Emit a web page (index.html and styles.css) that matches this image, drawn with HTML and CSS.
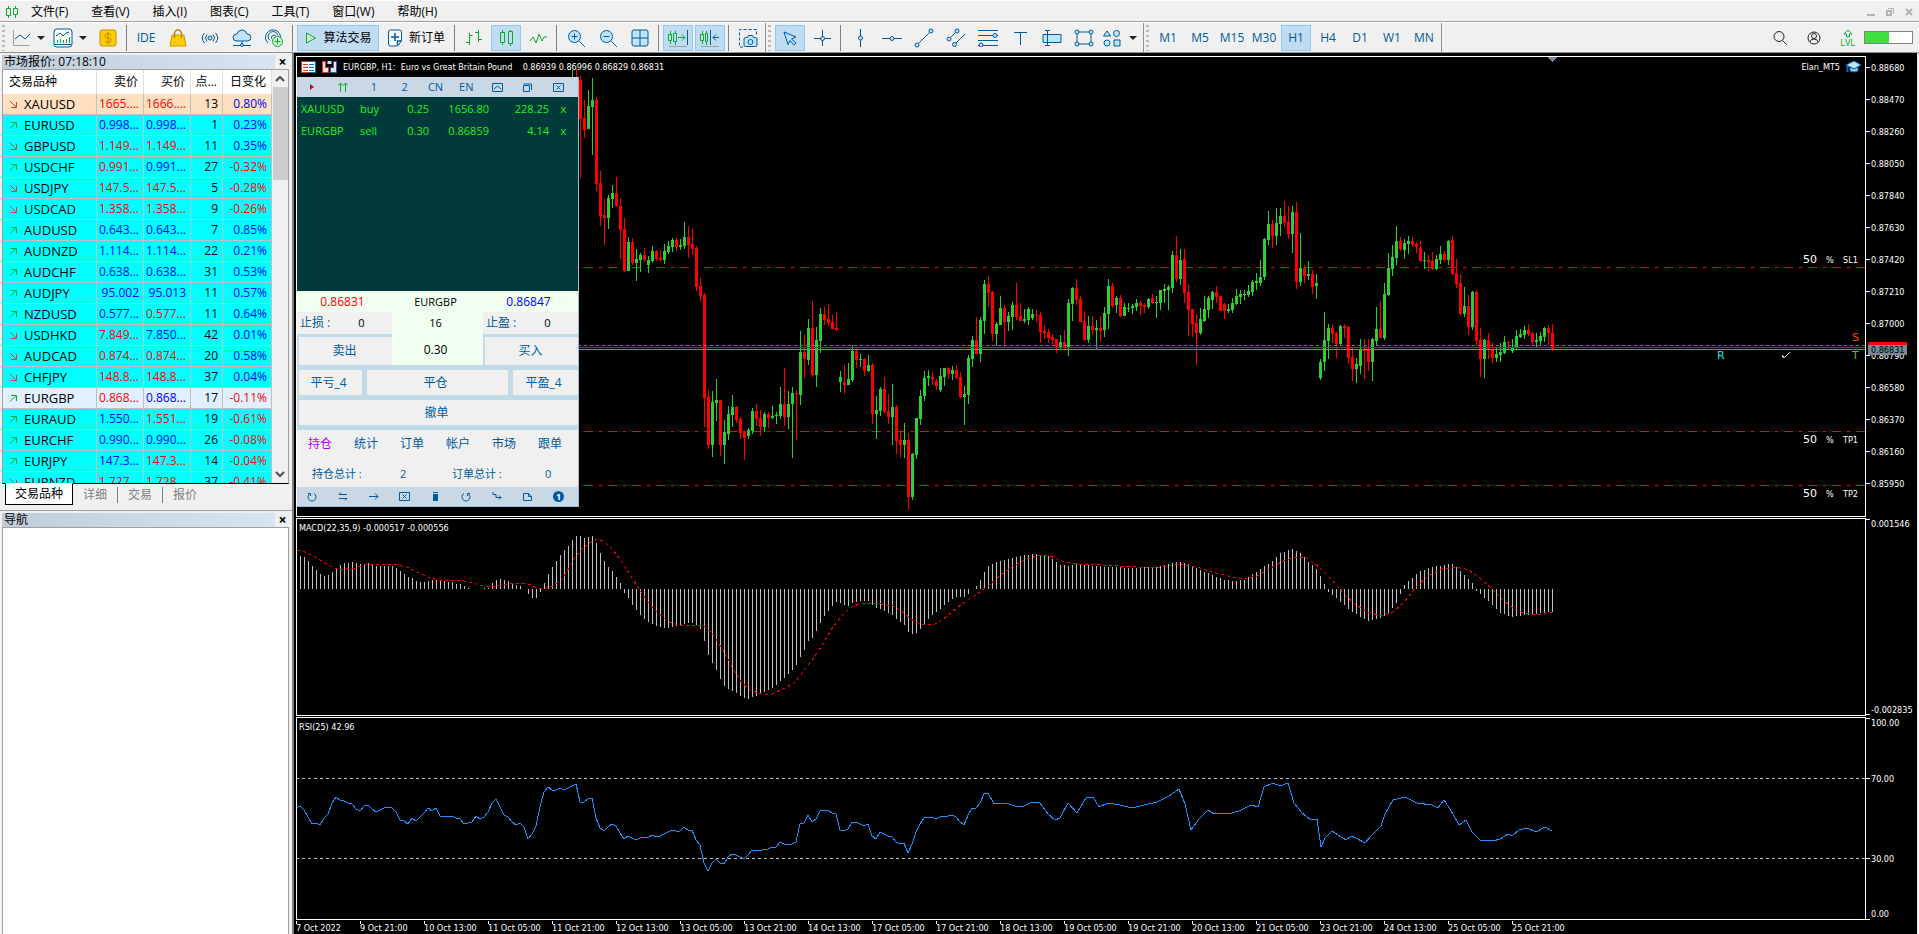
FILE: index.html
```html
<!DOCTYPE html>
<html lang="zh-CN">
<head>
    <meta charset="UTF-8">
    <meta name="viewport" content="width=device-width, initial-scale=1.0">
    <title>EURGBP, H1</title>
    <link rel="stylesheet" href="styles.css">
</head>
<body>
    <nav class="menubar">
        <svg class="menu-logo" width="14" height="14" viewBox="0 0 14 14"><path d="M3.500 1v2M3.500 11v2M10.500 1v2M10.500 9v4M1.500 3.500h4v7h-4zM8.500 3.500h4v6h-4z"/></svg>
        <button class="menu-item">文件(F)</button>
        <button class="menu-item">查看(V)</button>
        <button class="menu-item">插入(I)</button>
        <button class="menu-item">图表(C)</button>
        <button class="menu-item">工具(T)</button>
        <button class="menu-item">窗口(W)</button>
        <button class="menu-item">帮助(H)</button>
        <div class="window-controls">
            <button aria-label="最小化"><svg width="10" height="10"><path d="M1 8h8" stroke-width="2"/></svg></button>
            <button aria-label="还原"><svg width="10" height="10"><path d="M3 1.500h6M8.500 1v6" stroke-width="1"/><path d="M2 4h4v4h-4z" stroke-width="2"/></svg></button>
            <button aria-label="关闭"><svg width="10" height="10"><path d="M2 2l6 6M8 2l-6 6" stroke-width="2"/></svg></button>
        </div>
    </nav>

    <div class="toolbar">
        <span class="grip"></span>
        <button class="split" aria-label="图表类型">
            <svg width="20" height="20"><path class="g" d="M2.500 2v15.500h16"/><path class="b" d="M4 11l5-4 5 4 5-5"/></svg><i class="caret"></i>
        </button>
        <button class="split" aria-label="模板">
            <svg width="20" height="20"><rect class="bf w" x="1" y="1" width="18" height="18" rx="3"/><path class="b" d="M3 8l4-3 3 3 3-3 3-1"/><path class="n" d="M4.500 15v-3M7.500 15v-4M10.500 15v-3M13.500 15v-4M16.500 15v-6"/><path class="b" d="M2 16.500h16"/></svg><i class="caret"></i>
        </button>
        <button class="tool" aria-label="账户"><svg width="18" height="18"><rect x="1" y="1" width="16" height="16" rx="2" fill="#fc0" stroke="#c89400"/><path d="M12 6q-1-1.500-3-1.500t-3 2 3 2.500 3 2.500-3 2-3-1.500M9 3v12" fill="none" stroke="#c08600"/></svg></button>
        <span class="sep"></span>
        <button class="tool ide">IDE</button>
        <button class="tool" aria-label="市场"><svg width="18" height="18"><path d="M3 6h12l2 11h-16z" fill="#fc0" stroke="#d09a00"/><path d="M5.500 9v-4a3 3.500 0 0 1 7 0v4" fill="none" stroke="#b98500" stroke-width="1.500"/></svg></button>
        <button class="tool" aria-label="信号"><svg width="18" height="14"><circle class="bf" cx="9" cy="7" r="2"/><path class="b" d="M6 3.500q-3 3.500 0 7M12 3.500q3 3.500 0 7M3.500 2q-4.500 5 0 10M14.500 2q4.500 5 0 10"/></svg></button>
        <button class="tool" aria-label="虚拟主机"><svg width="20" height="18"><path class="bf" d="M5 12q-4 0-4-3.500t4-3.500q1-4 5-4t5 4q4 0 4 3.500t-4 3.500z"/><path class="b" d="M10 12v3M1 16.500h7M12 16.500h7"/><circle class="bf" cx="10" cy="16" r="1.500"/></svg></button>
        <button class="tool" aria-label="VPS"><svg width="20" height="20"><path class="b" d="M4 15a7.500 7.500 0 1 1 12.500-6M6 12.500a5 5 0 1 1 8-5M8 11a2.500 2.500 0 1 1 4-3"/><circle cx="13.500" cy="13.500" r="5" fill="#d7f5d7" stroke="#0ba82a"/><path class="n" d="M13.500 10.500v6M10.500 13.500h6"/></svg></button>
        <span class="sep"></span>
        <button class="tool wide active algo"><svg width="13" height="14"><path d="M2.500 2l9 5-9 5z" fill="#c9f2cf" stroke="#0ba82a"/></svg>算法交易</button>
        <button class="tool wide order"><svg width="16" height="18"><path class="bf w" d="M3.500 1h9q2 0 2 2v9l-4 5h-7q-2 0-2-2v-12q0-2 2-2z"/><path class="b" d="M8 4v8M4 8h8M14 12h-3.500v4" stroke-width="1.500"/></svg>新订单</button>
        <span class="sep"></span>
        <button class="tool" aria-label="柱状图"><svg width="18" height="18"><path class="n" d="M4.500 4v12M1 13.500h3.500M4.500 6.500h3M13.500 1v12M10 3.500h3.500M13.500 10.500h3.500"/></svg></button>
        <button class="tool active" aria-label="蜡烛图"><svg width="16" height="18"><path class="n" d="M4.500 1v2M4.500 14v2M12.500 1v1M12.500 15v2M2.500 3.500h4v10h-4zM10.500 2.500h4v12h-4z"/></svg></button>
        <button class="tool" aria-label="折线图"><svg width="18" height="12"><path class="n" d="M1 9l3-4 3 6 3-9 3 7 2-4h3"/></svg></button>
        <span class="sep"></span>
        <button class="tool" aria-label="放大"><svg width="20" height="20"><circle class="bf" cx="8.500" cy="8.500" r="6"/><path class="b" d="M13 13l6 6M8.500 5.500v6M5.500 8.500h6"/></svg></button>
        <button class="tool" aria-label="缩小"><svg width="20" height="20"><circle class="bf" cx="8.500" cy="8.500" r="6"/><path class="b" d="M13 13l6 6M5.500 8.500h6"/></svg></button>
        <button class="tool" aria-label="平铺"><svg width="18" height="18"><rect class="bf" x="1" y="1" width="16" height="16" rx="2"/><path class="b" d="M9 1v16M1 9h16"/></svg></button>
        <span class="sep"></span>
        <button class="tool active" aria-label="自动滚动"><svg width="22" height="18"><path class="n" d="M3.500 2v3M3.500 12v3M1.500 5.500h3v6h-3zM8.500 2v2M8.500 13v3M6.500 4.500h3v8h-3zM11 8.500h7M15 5.500l3 3-3 3"/><path class="b" d="M20.500 1v15"/><path class="g" d="M2 17.500h18"/></svg></button>
        <button class="tool active" aria-label="图表平移"><svg width="22" height="18"><path class="n" d="M3.500 2v3M3.500 12v3M1.500 5.500h3v6h-3zM7.500 2v2M7.500 13v3M6.500 4.500h2v8h-2z"/><path class="b" d="M11.500 1v15M20 8.500h-6M17 5.500l-3 3 3 3"/><path class="g" d="M2 17.500h18"/></svg></button>
        <span class="sep"></span>
        <button class="tool" aria-label="截图"><svg width="20" height="20"><path class="b" stroke-dasharray="3 2" d="M5 19h-3.500v-17.500h17v7"/><path class="bf" d="M6 11q0-1.500 1.500-1.500h2l1-2h4l1 2h2q1.500 0 1.500 1.500v6q0 1.500-1.500 1.500h-10q-1.500 0-1.500-1.500z"/><circle class="bf" cx="12.500" cy="14" r="2.500"/></svg></button>
        <span class="edge"></span><span class="grip"></span>
        <button class="tool active" aria-label="光标"><svg width="16" height="16"><path class="bf" d="M2 2l12 5-4.500 2 4.500 4-2 2-4-4.500-2 4z"/></svg></button>
        <button class="tool" aria-label="十字线"><svg width="18" height="18"><path class="b" d="M9.500 1v16M1 9.500h17"/><circle class="bf" cx="9.500" cy="9.500" r="2"/></svg></button>
        <span class="sep"></span>
        <button class="tool" aria-label="垂直线"><svg width="18" height="20"><path class="b" d="M9.500 1v18"/><circle class="bf" cx="9.500" cy="10" r="2"/></svg></button>
        <button class="tool" aria-label="水平线"><svg width="20" height="18"><path class="b" d="M0 9.500h20"/><circle class="bf" cx="10" cy="9.500" r="2"/></svg></button>
        <button class="tool" aria-label="趋势线"><svg width="20" height="20"><path class="b" d="M3 17l14-14"/><circle class="bf" cx="3" cy="17" r="2"/><circle class="bf" cx="17" cy="3" r="2"/></svg></button>
        <button class="tool" aria-label="通道"><svg width="20" height="20"><path class="b" d="M3 11l8-8M8 17l11-11"/><circle class="bf" cx="3" cy="11" r="2"/><circle class="bf" cx="11" cy="3" r="2"/><circle class="bf" cx="8.500" cy="16.500" r="2"/></svg></button>
        <button class="tool" aria-label="斐波那契"><svg width="20" height="18"><path class="b" d="M0 1.500h20M0 6.500h20M0 11.500h20M0 16.500h20"/><circle class="bf" cx="17" cy="6.500" r="2"/><circle class="bf" cx="3" cy="16" r="2"/></svg></button>
        <button class="tool" aria-label="文字"><svg width="16" height="16"><path class="b" d="M2 2.500h13M8.500 2v13"/></svg></button>
        <button class="tool" aria-label="标签"><svg width="20" height="18"><path class="bf" d="M1 5.500h18v8h-18z"/><path class="b" d="M3 1.500h5M5.500 2v15M3 16.500h5"/></svg></button>
        <button class="tool" aria-label="矩形"><svg width="20" height="18"><path class="b" d="M3 3h14v12h-14z"/><circle class="bf" cx="3" cy="3" r="2"/><circle class="bf" cx="17" cy="3" r="2"/><circle class="bf" cx="3" cy="15" r="2"/><circle class="bf" cx="17" cy="15" r="2"/></svg></button>
        <button class="split shapes" aria-label="图形">
            <svg width="18" height="18"><path class="bf" d="M4 2l3.500 5h-7z"/><circle class="bf" cx="13.500" cy="4.500" r="3"/><circle class="bf" cx="4" cy="14" r="3"/><path class="bf" d="M11 11h6v6h-6z"/></svg><i class="caret"></i>
        </button>
        <span class="edge"></span><span class="grip"></span>
        <button class="tool">M1</button>
        <button class="tool">M5</button>
        <button class="tool">M15</button>
        <button class="tool">M30</button>
        <button class="tool active">H1</button>
        <button class="tool">H4</button>
        <button class="tool">D1</button>
        <button class="tool">W1</button>
        <button class="tool">MN</button>
        <span class="edge"></span>
        <div class="status">
            <button aria-label="搜索"><svg width="16" height="16"><circle class="k" cx="7" cy="6.500" r="5"/><path class="k" d="M10.500 10.500l4 4"/></svg></button>
            <button aria-label="用户"><svg width="16" height="16"><circle class="k" cx="8" cy="8" r="6"/><circle class="k" cx="8" cy="6" r="2.500"/><path class="k" d="M3.500 12q1-3 4.500-3t4.500 3"/></svg></button>
            <div class="level"><svg width="10" height="9"><path class="n" d="M3.500 8v-3h-2.500l4-4 4 4h-2.500v3z"/></svg><span>LVL</span></div>
            <div class="battery"><span></span></div>
        </div>
    </div>

    <div class="workspace">
        <aside class="dock">
            <section class="market">
                <header class="dock-title"><h2>市场报价: 07:18:10</h2><button aria-label="关闭">×</button></header>
                <div class="market-body">
                    <table class="quotes">
                        <colgroup><col class="c-sym"><col class="c-price"><col class="c-price"><col class="c-spread"><col></colgroup>
                        <thead><tr><th>交易品种</th><th>卖价</th><th>买价</th><th>点...</th><th>日变化</th></tr></thead>
                        <tbody id="quotes"></tbody>
                    </table>
                    <div class="scrollbar">
                        <svg width="10" height="7"><path d="M1 6l4-4 4 4"/></svg>
                        <span class="thumb"></span>
                        <svg width="10" height="7"><path d="M1 1l4 4 4-4"/></svg>
                    </div>
                </div>
                <div class="tabs">
                    <button class="tab current">交易品种</button>
                    <button class="tab">详细</button>
                    <button class="tab">交易</button>
                    <button class="tab">报价</button>
                </div>
            </section>
            <section class="navigator">
                <header class="dock-title"><h2>导航</h2><button aria-label="关闭">×</button></header>
                <div class="navigator-body"></div>
            </section>
        </aside>

        <main class="chart">
            <div class="pane main-pane">
                <div class="plot">
                    <svg id="price" class="canvas"></svg>
                    <div class="chart-title">
                        <svg width="15" height="12"><rect width="8" height="12" fill="#d9362b"/><rect x="8" width="7" height="12" fill="#0a6ab5"/><rect x="1" y="1" width="13" height="10" fill="#fff"/><path d="M2 3.500h5M2 6.500h5M2 9.500h5" stroke="#d9362b"/><path d="M8 3.500h5M8 6.500h5M8 9.500h5" stroke="#0a6ab5"/></svg>
                        <svg width="15" height="12"><path d="M0 0h4v6h3v6h-7z" fill="#d9362b"/><path d="M11 0h4v12h-7v-6h3z" fill="#0a6ab5"/><path d="M1 1v10h5v-4h-3v-6zM14 1v10h-5v-4h3v-6z" fill="#fbe0dc"/><path d="M5.500 0h4v3h-4z" fill="#ddd"/></svg>
                        <span>EURGBP, H1:&nbsp; Euro vs Great Britain Pound&nbsp;&nbsp;&nbsp; 0.86939 0.86996 0.86829 0.86831</span>
                        <span class="expert">Elan_MT5</span>
                        <svg width="15" height="12"><path d="M0 4l8-4 7 4-7 4z" fill="#bfe4ff" stroke="#0a6ab5"/><path d="M4 6v4q4 2 8 0v-4l-4 2z" fill="#8ecbf5" stroke="#0a6ab5"/><path d="M1.500 5v6" stroke="#0a6ab5" stroke-width="2"/></svg>
                    </div>

                    <div class="trader">
                        <div class="trader-bar">
                            <button aria-label="菜单"><svg width="6" height="8"><path d="M1 1v6l4-3z" fill="#b01020"/></svg></button>
                            <button aria-label="上移"><svg width="10" height="11"><path class="n" d="M2.500 1v9M7.500 1v9M0 3.500l2.500-2.500 2.500 2.500 2.500-2.500 2.500 2.500"/></svg></button>
                            <button>1</button>
                            <button>2</button>
                            <button>CN</button>
                            <button>EN</button>
                            <button aria-label="收起"><svg width="11" height="9"><path class="b" d="M.500.500h10v8h-10zM2 6l3.500-3 3.500 3"/></svg></button>
                            <button aria-label="还原"><svg width="9" height="9"><path class="b" d="M.500 2.500h6v6h-6zM.500 1h8v6"/></svg></button>
                            <button aria-label="关闭"><svg width="11" height="9"><path class="b" d="M.500.500h10v8h-10zM3.500 2.500l4 4M7.500 2.500l-4 4"/></svg></button>
                        </div>
                        <div class="positions">
                            <table>
                                <tr><td class="p-sym">XAUUSD</td><td class="p-side">buy</td><td class="p-lots">0.25</td><td class="p-num">1656.80</td><td class="p-num">228.25</td><td class="p-x">x</td></tr>
                                <tr><td>EURGBP</td><td>sell</td><td class="p-lots">0.30</td><td class="p-num">0.86859</td><td class="p-num">4.14</td><td class="p-x">x</td></tr>
                            </table>
                        </div>
                        <div class="ticket">
                            <div class="price bid">0.86831</div>
                            <div class="symbol">EURGBP</div>
                            <div class="price ask">0.86847</div>
                            <label class="stop">止损 :<input value="0"></label>
                            <div class="center">
                                <span>16</span>
                                <input class="volume" aria-label="手数" value="0.30">
                            </div>
                            <label class="stop">止盈 :<input value="0"></label>
                            <button class="deal">卖出</button>
                            <button class="deal">买入</button>
                        </div>
                        <div class="closers">
                            <button>平亏_4</button>
                            <button>平仓</button>
                            <button>平盈_4</button>
                            <button class="cancel">撤单</button>
                        </div>
                        <div class="trader-tabs">
                            <button class="on">持仓</button><button>统计</button><button>订单</button><button>帐户</button><button>市场</button><button>跟单</button>
                        </div>
                        <div class="totals">
                            <span>持仓总计 :</span><b>2</b><span>订单总计 :</span><b>0</b>
                        </div>
                        <div class="trader-bar trader-foot">
                            <button aria-label="刷新"><svg width="10" height="10"><path class="b" d="M3 1.500a4 4 0 1 0 4 0M1 1.500h2.500v2.500"/></svg></button>
                            <button aria-label="反手"><svg width="10" height="9"><path class="b" d="M9 2.500h-8l2-2M1 6.500h8l-2 2"/></svg></button>
                            <button aria-label="锁仓"><svg width="10" height="9"><path class="b" d="M0 4.500h9M6 1.500l3 3-3 3"/></svg></button>
                            <button aria-label="清除"><svg width="11" height="9"><path class="b" d="M.500.500h10v8h-10zM3.500 2.500l4 4M7.500 2.500l-4 4"/></svg></button>
                            <button aria-label="删除"><svg width="7" height="9"><path d="M1 0h5v1h-5zM1 2h5v7h-5z" fill="#005a9e"/></svg></button>
                            <button aria-label="撤销"><svg width="10" height="10"><path class="b" d="M3 1.500a4 4 0 1 0 4 0M9 1.500h-2.500v2.500"/></svg></button>
                            <button aria-label="跟随"><svg width="10" height="9"><path class="b" d="M1 0v2.500h3v3h5M7 3.500l2 2-2 2"/></svg></button>
                            <button aria-label="文档"><svg width="9" height="9"><path class="b" d="M.500 1.500h5l3 3v4h-8zM5.500 1.500v3h3"/></svg></button>
                            <button aria-label="通知" class="badge">1</button>
                        </div>
                    </div>
                </div>
                <svg id="priceScale" class="scale"></svg>
            </div>

            <div class="pane macd-pane">
                <div class="plot"><svg id="macd" class="canvas"></svg><div class="pane-title">MACD(22,35,9) -0.000517 -0.000556</div></div>
                <svg id="macdScale" class="scale"></svg>
            </div>

            <div class="pane rsi-pane">
                <div class="plot"><svg id="rsi" class="canvas"></svg><div class="pane-title">RSI(25) 42.96</div></div>
                <svg id="rsiScale" class="scale"></svg>
            </div>

            <ol class="time-axis" id="times"></ol>
        </main>
    </div>

    <script src="script.js"></script>
</body>
</html>
```
FILE: styles.css
```css
* {
    margin: 0;
    padding: 0;
    box-sizing: border-box;
}

body {
    font-family: "Open Sans", "Noto Sans CJK SC", sans-serif;
    font-size: 12px;
    line-height: 16px;
    color: #000;
    background: #f0f0f0;
    height: 100vh;
    display: flex;
    flex-direction: column;
    overflow: hidden;
}

button,
input {
    font: inherit;
    color: inherit;
    background: none;
    border: none;
}

svg {
    display: block;
    flex: none;
}

/* icon strokes */
.b, .bf, .n, .g, .k {
    fill: none;
    stroke: #005a9e;
}

.bf { fill: #bfe4ff; }
.bf.w { fill: #fff; }
.n { stroke: #0ba82a; }
.g { stroke: #a0a0a0; }
.k { stroke: #222; }

/* menu */
.menubar {
    display: flex;
    align-items: center;
    height: 23px;
    flex: none;
    padding-left: 5px;
    border-top: 1px solid #fff;
    border-bottom: 1px solid #fff;
    box-shadow: inset 0 -1px #a0a0a0;
}

.menu-logo {
    fill: none;
    stroke: #0ba82a;
    margin-right: 1px;
}

.menu-item {
    padding: 0 12px 0 11px;
    white-space: nowrap;
}

.window-controls {
    margin-left: auto;
    display: flex;
    gap: 9px;
    padding-right: 5px;
}

.window-controls path {
    fill: none;
    stroke: #b4b4b4;
}

/* toolbar */
.toolbar {
    display: flex;
    align-items: center;
    gap: 2px;
    height: 30px;
    flex: none;
    padding-left: 2px;
    color: #005a9e;
    border-bottom: 1px solid #909090;
}

.grip {
    width: 3px;
    height: 26px;
    margin-right: 2px;
    background: repeating-linear-gradient(#b8b8b8 0 2px, transparent 2px 5px);
}

.tool {
    width: 30px;
    height: 26px;
    display: flex;
    align-items: center;
    justify-content: center;
    border: 1px solid transparent;
    flex: none;
    white-space: nowrap;
}

.tool.active {
    background: #c0dcf3;
    border-color: #90c8f6;
}

.tool.wide {
    color: #000;
    gap: 6px;
}

.tool.algo { width: 82px; }
.tool.order { width: 70px; }

.split {
    width: 40px;
    height: 26px;
    display: flex;
    align-items: center;
    justify-content: space-between;
    padding: 0 4px 0 2px;
    flex: none;
}

.caret {
    border: 4px solid transparent;
    border-top-color: #222;
    border-bottom: none;
}

.sep {
    width: 1px;
    height: 26px;
    margin: 0 2px 0 1px;
    background: #808080;
    flex: none;
}

.edge {
    width: 1px;
    height: 29px;
    background: #909090;
    flex: none;
}

.status {
    margin-left: auto;
    display: flex;
    align-items: center;
    gap: 18px;
    padding-right: 6px;
}

.level {
    display: flex;
    flex-direction: column;
    align-items: center;
    font-size: 9px;
    line-height: 9px;
    color: #0ba82a;
}

.battery {
    width: 49px;
    height: 13px;
    margin-left: -9px;
    border: 1px solid #808080;
    background: #fff;
}

.battery span {
    display: block;
    width: 50%;
    height: 100%;
    background: #40e040;
}

/* left dock */
.workspace {
    flex: 1;
    min-height: 0;
    display: flex;
    padding-right: 2px;
}

.dock {
    width: 294px;
    flex: none;
    display: flex;
    flex-direction: column;
    padding-top: 2px;
    border-right: 2px solid #808080;
}

.market {
    height: 456px;
    flex: none;
    display: flex;
    flex-direction: column;
    border-bottom: 1px solid #a0a0a0;
}

.dock-title {
    display: flex;
    align-items: center;
    height: 14px;
    margin: 0 2px;
    flex: none;
}

.dock-title h2 {
    flex: 1;
    font-size: 12px;
    font-weight: 400;
    line-height: 14px;
    padding-left: 2px;
    background: linear-gradient(90deg, #bfcddb, #d7e4f2);
}

.dock-title button {
    width: 15px;
    font-size: 14px;
    font-weight: 700;
    line-height: 14px;
}

.market-body {
    flex: 1;
    min-height: 0;
    display: flex;
    overflow: hidden;
    margin: 0 3px 0 2px;
    border: 1px solid #a0a0a0;
    border-bottom-color: #000;
    background: #fff;
}

.quotes {
    width: 269px;
    flex: none;
    height: max-content;
    table-layout: fixed;
    border-spacing: 0;
}

.c-sym { width: 94px; }
.c-price { width: 47px; }
.c-spread { width: 32px; }

.quotes th {
    height: 24px;
    font-weight: 400;
    text-align: right;
    padding-right: 5px;
    border-right: 1px solid #e0e0e0;
    white-space: nowrap;
}

.quotes th:first-child {
    text-align: left;
    padding-left: 6px;
}

.quotes td {
    height: 21px;
    line-height: 16px;
    text-align: right;
    padding-right: 4px;
    border-right: 1px solid #c0c0c0;
    border-bottom: 1px solid #c0c0c0;
    white-space: nowrap;
}

.quotes td:first-child {
    font-size: 13px;
    text-align: left;
    padding-left: 6px;
}

.quotes td svg {
    display: inline-block;
    margin-right: 6px;
}

.quotes tbody tr { background: #0ff; }
.quotes tbody tr.gold { background: #ffe0c0; }
.quotes tbody tr.picked { background: #e1f0ff; }
.up { color: #00f; }
.down { color: #f00; }

.scrollbar {
    flex: 1;
    display: flex;
    flex-direction: column;
    align-items: center;
    padding: 5px 0;
    background: #f0f0f0;
}

.scrollbar path {
    fill: none;
    stroke: #505050;
    stroke-width: 2;
}

.thumb {
    width: 15px;
    height: 93px;
    margin: 5px 0 auto;
    background: #cdcdcd;
}

.tabs {
    display: flex;
    height: 27px;
    flex: none;
    padding-left: 5px;
    margin-top: -1px;
    z-index: 1;
}

.tab {
    height: 16px;
    margin-top: 4px;
    padding: 0 10px;
    color: #808080;
    border-right: 1px solid #808080;
}

.tab:last-child { border-right: none; }

.tab.current {
    height: 22px;
    margin-top: 0;
    padding: 0 9px;
    color: #000;
    background: #fff;
    border: 1px solid #000;
    border-top-color: #fff;
}

.navigator {
    flex: 1;
    display: flex;
    flex-direction: column;
    padding-top: 2px;
}

.navigator-body {
    flex: 1;
    margin: 0 3px 0 2px;
    border: 1px solid #a0a0a0;
    border-bottom: none;
    background: #fff;
}

/* chart window */
.chart {
    flex: 1;
    min-width: 0;
    display: grid;
    grid-template-rows: 461fr 198fr 203fr 13px;
    row-gap: 1px;
    padding: 3px 0 0 2px;
    background: #000;
    color: #fff;
    font-family: "DejaVu Sans Condensed", "DejaVu Sans", sans-serif;
    font-size: 9px;
    line-height: 12px;
}

.pane {
    display: grid;
    grid-template-columns: 1fr 51px;
    min-height: 0;
}

.plot {
    position: relative;
    border: 1px solid #fff;
    overflow: hidden;
}

.canvas,
.scale {
    width: 100%;
    height: 100%;
    shape-rendering: crispEdges;
}

.canvas {
    position: absolute;
    inset: 0;
}

.scale { overflow: visible; }

.canvas text,
.scale text {
    fill: #fff;
}

.canvas .big {
    font-family: "DejaVu Sans", sans-serif;
    font-size: 11px;
}

.canvas .mark-s { fill: #ff4500; }
.canvas .mark-t { fill: #6b2; }
.canvas .mark-r { fill: #20e0e0; }
.scale .on-tag { fill: #000; }

.rise { fill: #32cd32; }
.fall { fill: #f00; }
.target { stroke: #f00; stroke-dasharray: 9 6 3 6; }
.entry { stroke: #00c000; stroke-dasharray: 3 3; }
.ask-line { stroke: #f00; }
.bid-line { stroke: #778899; }
.bars { fill: #c0c0c0; }
.signal { fill: none; stroke: #f00; stroke-dasharray: 3 3; }
.level-line { stroke: #c0c0c0; stroke-dasharray: 3 3; }
.rsi-line { fill: none; stroke: #1e90ff; }
.tick { stroke: #fff; }

.chart-title {
    position: relative;
    display: flex;
    align-items: center;
    gap: 6px;
    height: 20px;
    padding: 0 4px;
    white-space: pre;
}

.expert { margin-left: auto; }

.pane-title {
    position: relative;
    padding: 3px 2px;
}

.time-axis {
    display: flex;
    list-style: none;
    white-space: nowrap;
    overflow: hidden;
}

.time-axis li {
    width: 64px;
    flex: none;
    line-height: 15px;
    background: linear-gradient(#fff, #fff) 0 0 / 1px 3px no-repeat;
}

/* trading panel floating over the price chart */
.trader {
    position: absolute;
    left: 0;
    top: 20px;
    width: 282px;
    background: #c0dae8;
    border-right: 1px solid #a0b8c8;
    border-bottom: 1px solid #a0b8c8;
    color: #005a9e;
    font-family: "Open Sans", "Noto Sans CJK SC", sans-serif;
    font-size: 12px;
    line-height: 16px;
}

.trader-bar {
    display: grid;
    grid-template-columns: repeat(9, 1fr);
    height: 20px;
    padding-right: 4px;
    background: #cad8e6;
}

.trader-bar button {
    display: flex;
    align-items: center;
    justify-content: center;
    font-size: 11px;
}

.trader-foot { height: 19px; }

.trader-bar .badge {
    width: 11px;
    height: 11px;
    margin: auto;
    font-size: 9px;
    font-weight: 700;
    color: #fff;
    background: #005a9e;
    border-radius: 50%;
}

.positions {
    height: 194px;
    padding: 1px 0 0 4px;
    background: #003a3a;
    color: #20f020;
    font-size: 11px;
}

.positions table {
    width: 277px;
    table-layout: fixed;
    border-spacing: 0;
}

.positions td { height: 22px; }
.p-sym { width: 59px; }
.p-side { width: 30px; }
.p-lots { width: 39px; text-align: right; }
.p-num { width: 60px; text-align: right; }
.p-x { width: 29px; text-align: center; }

.ticket {
    display: grid;
    grid-template-columns: 95px 91px 95px;
    grid-template-rows: 21px 22px 31px;
    text-align: center;
}

.ticket > .price,
.ticket > .symbol {
    padding-right: 4px;
    background: #f0fff0;
    line-height: 22px;
}

.bid { color: #f00; }
.ask { color: #00f; }
.symbol { color: #000; font-size: 11px; }

.stop {
    display: flex;
    align-items: center;
    padding-left: 3px;
    background: #f0f0f0;
    white-space: nowrap;
}

.stop input {
    width: 62px;
    color: #000;
    font-size: 11px;
    text-align: center;
}

.center {
    grid-row: 2 / 4;
    grid-column: 2;
    display: flex;
    flex-direction: column;
    padding-right: 4px;
    background: #f0fff0;
    color: #000;
    font-size: 11px;
    line-height: 22px;
}

.volume {
    width: 100%;
    flex: 1;
    font-size: 12px;
    text-align: center;
}

.deal {
    margin: 3px 0 0 2px;
    padding-right: 2px;
    background: #f0f0f0;
}

.closers {
    display: grid;
    grid-template-columns: 63px 1fr 65px;
    grid-auto-rows: 25px;
    gap: 5px;
    padding: 5px 0 5px 2px;
}

.closers button {
    padding-right: 4px;
    background: #f0f0f0;
    border-radius: 1px;
}

.closers .cancel { grid-column: 1 / 4; }

.trader-tabs {
    display: grid;
    grid-template-columns: repeat(6, 46px);
    height: 27px;
    background: #f0f0f0;
}

.on { color: #b000ff; }

.totals {
    display: grid;
    grid-template-columns: 88px 52px 93px 1fr;
    align-items: center;
    height: 30px;
    padding: 4px 0 0 15px;
    background: #f0f0f0;
    font-size: 11px;
}

.totals b { font-weight: 400; }
```
FILE: script.js
```js
const NS = 'http://www.w3.org/2000/svg';

function draw(parent, tag, attrs, text) {
    const el = document.createElementNS(NS, tag);
    for (const key in attrs) el.setAttribute(key, attrs[key]);
    if (text) el.textContent = text;
    parent.appendChild(el);
    return el;
}

// symbol, direction, bid, bid dir, ask, ask dir, spread, change
const quotes = [
    ['XAUUSD', 0, '1665....', 0, '1666....', 0, 13, '0.80%'],
    ['EURUSD', 1, '0.998...', 1, '0.998...', 1, 1, '0.23%'],
    ['GBPUSD', 0, '1.149...', 0, '1.149...', 0, 11, '0.35%'],
    ['USDCHF', 1, '0.991...', 0, '0.991...', 1, 27, '-0.32%'],
    ['USDJPY', 0, '147.5...', 0, '147.5...', 0, 5, '-0.28%'],
    ['USDCAD', 0, '1.358...', 0, '1.358...', 0, 9, '-0.26%'],
    ['AUDUSD', 1, '0.643...', 1, '0.643...', 1, 7, '0.85%'],
    ['AUDNZD', 1, '1.114...', 1, '1.114...', 1, 22, '0.21%'],
    ['AUDCHF', 1, '0.638...', 1, '0.638...', 1, 31, '0.53%'],
    ['AUDJPY', 1, '95.002', 1, '95.013', 1, 11, '0.57%'],
    ['NZDUSD', 1, '0.577...', 1, '0.577...', 0, 11, '0.64%'],
    ['USDHKD', 0, '7.849...', 0, '7.850...', 1, 42, '0.01%'],
    ['AUDCAD', 0, '0.874...', 0, '0.874...', 0, 20, '0.58%'],
    ['CHFJPY', 0, '148.8...', 0, '148.8...', 0, 37, '0.04%'],
    ['EURGBP', 1, '0.868...', 0, '0.868...', 1, 17, '-0.11%'],
    ['EURAUD', 1, '1.550...', 1, '1.551...', 0, 19, '-0.61%'],
    ['EURCHF', 1, '0.990...', 1, '0.990...', 1, 26, '-0.08%'],
    ['EURJPY', 1, '147.3...', 1, '147.3...', 0, 14, '-0.04%'],
    ['EURNZD', 0, '1.727...', 0, '1.728...', 0, 37, '-0.41%']
];

const arrows = [
    '<svg width="9" height="9"><path d="M1 1l6 6M7.500 2v5.500h-5.500" fill="none" stroke="#e04030"/></svg>',
    '<svg width="9" height="9"><path d="M1 7.500l6-6M2 1.500h5.500v5.500" fill="none" stroke="#0ba82a"/></svg>'
];

document.getElementById('quotes').innerHTML = quotes.map(q => {
    const row = q[0] === 'XAUUSD' ? 'gold' : q[0] === 'EURGBP' ? 'picked' : '';
    const dir = v => v ? 'up' : 'down';
    return `<tr class="${row}"><td>${arrows[q[1]]}${q[0]}</td><td class="${dir(q[3])}">${q[2]}</td>` +
        `<td class="${dir(q[5])}">${q[4]}</td><td>${q[6]}</td><td class="${dir(q[7][0] !== '-')}">${q[7]}</td></tr>`;
}).join('');

// one candle every 4px: rising, high, body top, body bottom, low
const candles = [
    [1,10,18,19,20],[0,9,18,19,20],[0,16,20,59,118],
    [0,40,58,70,78],[1,30,46,69,69],[1,18,40,47,95],[0,37,40,124,131],[0,111,123,156,166],[0,139,155,158,185],
    [1,135,138,158,169],[1,125,133,139,148],[0,117,133,146,147],[0,138,146,170,199],[0,158,169,211,212],
    [1,177,182,211,211],[0,178,182,203,205],[1,189,199,203,221],[1,193,195,200,212],[0,188,195,200,202],
    [1,196,200,205,213],[1,186,191,201,203],[0,190,191,199,201],[0,190,198,200,201],[1,184,191,200,204],
    [1,181,186,192,194],[1,178,180,187,192],[0,178,180,187,191],[1,179,185,187,190],[1,162,177,186,189],
    [0,166,177,185,198],[0,169,184,189,195],[0,186,188,227,231],[0,218,226,236,241],[0,233,235,338,367],
    [0,330,337,385,389],[1,331,342,385,397],[1,319,340,343,361],[0,340,340,385,396],[1,360,372,385,404],
    [1,346,354,374,380],[1,335,347,355,367],[0,346,347,360,363],[0,357,359,373,379],[0,371,371,378,400],
    [1,368,370,376,379],[1,348,351,371,374],[0,344,351,359,366],[0,350,358,367,376],[1,352,354,367,372],
    [0,352,354,358,368],[1,346,356,358,359],[1,352,355,356,364],[1,327,344,356,359],[0,308,344,357,366],
    [1,331,344,357,369],[1,327,333,344,398],[0,330,333,334,380],[1,271,292,335,345],[0,275,292,299,318],
    [1,259,268,300,305],[0,241,268,315,317],[1,267,280,315,327],[1,248,254,281,293],[0,247,254,260,265],
    [0,244,259,263,266],[0,255,262,269,269],[0,252,268,270,271],[1,311,317,322,332],[0,305,322,325,334],
    [1,303,319,325,325],[1,285,291,320,322],[0,287,291,300,308],[1,294,299,300,307],[0,298,299,311,316],
    [1,295,305,311,312],[0,303,305,354,364],[1,336,350,354,379],[1,327,329,351,356],[0,317,329,352,353],
    [0,334,351,357,364],[1,324,347,357,385],[0,345,347,381,394],[0,372,380,385,398],[1,363,380,385,398],
    [0,373,380,437,450],[1,393,394,437,440],[1,358,358,395,399],[1,330,336,359,365],[1,311,318,336,341],
    [1,310,316,318,326],[0,312,317,319,325],[0,319,321,326,330],[1,308,316,330,332],[1,308,308,317,326],
    [0,307,308,314,319],[1,306,310,314,320],[0,305,310,318,319],[0,312,317,337,338],[1,326,334,337,365],
    [1,295,298,335,344],[1,276,280,299,307],[0,257,280,294,294],[1,257,260,294,302],[1,220,224,261,274],
    [0,216,224,233,247],[0,231,232,274,281],[1,262,264,274,286],[1,236,248,265,265],[0,245,248,262,288],
    [1,252,256,262,271],[1,242,245,257,270],[0,223,245,257,260],[0,243,256,261,261],[1,249,259,261,263],
    [1,247,249,260,265],[1,249,254,258,260],[0,250,255,256,262],[0,252,255,272,283],[0,265,271,273,279],
    [0,269,272,278,283],[0,274,277,280,284],[0,279,279,287,293],[1,275,282,287,289],[0,270,282,288,290],
    [1,239,243,288,296],[1,227,228,244,261],[0,219,228,240,245],[0,236,239,262,262],[0,251,261,280,281],
    [1,256,266,280,283],[0,256,266,270,275],[1,260,268,270,290],[0,256,268,271,282],[1,247,253,270,277],
    [1,219,226,254,269],[0,223,226,246,248],[1,236,238,245,253],[0,235,238,256,257],[1,243,247,256,256],
    [1,243,248,249,252],[1,244,246,248,254],[1,239,243,247,251],[0,241,243,246,255],[0,243,245,247,253],
    [1,238,239,247,249],[0,234,238,243,244],[1,236,242,243,258],[1,230,230,243,250],[1,224,229,231,243],
    [1,225,227,230,250],[1,191,195,228,233],[0,176,195,219,222],[1,189,200,219,225],[0,189,199,233,243],
    [0,224,232,250,276],[0,249,249,264,277],[0,254,263,273,305],[1,248,259,273,275],[1,236,249,261,262],
    [1,236,238,250,258],[1,231,232,240,249],[0,226,232,237,243],[0,236,236,251,251],[0,243,244,251,259],
    [1,244,249,251,253],[1,238,243,250,253],[1,229,236,244,245],[1,230,234,237,244],[1,230,234,235,240],
    [1,225,231,235,237],[1,220,222,232,236],[1,213,221,223,230],[1,200,217,223,226],[1,178,179,217,220],
    [1,151,164,180,185],[0,160,164,176,188],[1,148,163,176,185],[1,148,156,164,176],[0,141,156,163,167],
    [0,146,162,174,179],[1,146,152,174,193],[0,142,152,222,229],[1,173,208,222,226],[0,205,208,216,223],
    [1,201,214,216,220],[0,210,214,227,234],[1,214,223,226,239],[1,299,302,318,320],[1,252,280,302,311],
    [1,264,268,281,299],[0,265,268,274,283],[0,272,273,284,298],[1,265,266,284,286],[0,264,266,268,278],
    [0,266,267,298,304],[0,288,297,309,321],[1,298,304,309,323],[1,279,290,306,314],[0,279,290,291,319],
    [0,279,290,302,311],[1,278,279,302,321],[1,247,269,281,286],[0,241,269,278,278],[1,223,234,278,280],
    [1,193,208,235,236],[1,185,197,209,216],[1,166,181,198,205],[0,177,181,189,191],[1,179,183,190,199],
    [1,176,181,184,194],[0,177,181,185,187],[0,182,184,187,193],[0,181,188,201,202],[1,192,200,201,209],
    [0,195,200,202,211],[0,192,201,209,210],[1,195,199,209,210],[1,186,194,200,204],[0,191,194,200,201],
    [1,180,181,200,205],[0,176,180,214,215],[0,199,213,224,228],[0,214,223,254,255],[1,227,246,254,257],
    [0,235,246,267,275],[1,231,232,267,270],[0,230,232,281,286],[0,268,280,299,317],[1,279,280,299,318],
    [0,273,280,290,299],[0,282,289,298,303],[1,287,294,298,302],[1,283,292,295,302],[1,276,282,293,294],
    [0,281,282,283,289],[1,279,287,291,293],[1,270,276,288,289],[1,269,274,277,278],[1,266,270,275,279],
    [0,264,270,274,276],[0,272,273,282,286],[1,273,280,282,288],[1,272,276,281,285],[1,267,268,277,282],
    [0,265,268,273,285],[0,264,273,290,291]
];

const price = document.getElementById('price');
const hline = (svg, y, cls) => draw(svg, 'line', { x1: -1, x2: '100%', y1: y + .5, y2: y + .5, class: cls });

hline(price, 210, 'target');
hline(price, 374, 'target');
hline(price, 428, 'target');
candles.forEach(([up, high, top, bottom, low], i) => {
    const x = 275 + i * 4;
    const g = draw(price, 'g', { class: up ? 'rise' : 'fall' });
    draw(g, 'rect', { x, y: high + 3, width: 1, height: low - high });
    draw(g, 'rect', { x: x - 1, y: top + 3, width: 3, height: Math.max(1, bottom - top) });
});
hline(price, 288, 'entry');
hline(price, 290, 'ask-line');
hline(price, 292, 'bid-line');
draw(price, 'path', { d: 'M1250 0h10l-5 5z', fill: '#778899' });

// marks pinned to the right edge
const right = draw(price, 'svg', { x: '100%', y: 0, overflow: 'visible' });
[['SL1', 206], ['TP1', 386], ['TP2', 440]].forEach(([name, y]) => {
    draw(right, 'text', { x: -62, y, class: 'big' }, '50');
    draw(right, 'text', { x: -39, y }, '%');
    draw(right, 'text', { x: -22, y }, name);
});
draw(right, 'text', { x: -13, y: 284, class: 'big mark-s' }, 'S');
draw(right, 'text', { x: -13, y: 302, class: 'big mark-t' }, 'T');
draw(right, 'text', { x: -148, y: 302, class: 'big mark-r' }, 'R');
draw(right, 'path', { d: 'M-83 298l2 3 6-6', fill: 'none', stroke: '#ddd' });

function scale(id, labels) {
    const svg = document.getElementById(id);
    labels.forEach(([text, y, textY]) => {
        draw(svg, 'line', { x1: 0, x2: 4, y1: y + .5, y2: y + .5, class: 'tick' });
        draw(svg, 'text', { x: 5, y: (textY || y) + 4 }, text);
    });
    return svg;
}

const prices = [];
for (let i = 0; i < 14; i++) prices.push([(0.8868 - i * 0.0021).toFixed(5), 11 + i * 32]);
const priceScale = scale('priceScale', prices);
draw(priceScale, 'rect', { x: 2, y: 286, width: 39, height: 3, fill: '#f00' });
draw(priceScale, 'rect', { x: 2, y: 289, width: 39, height: 10, fill: '#778899' });
draw(priceScale, 'text', { x: 5, y: 297, class: 'on-tag' }, '0.86831');

// MACD histogram, pixels above or below zero, one bar every 4px
const histogram = [
    33,32,28,23,19,15,13,14,17,21,24,26,26,27,26,25,25,26,25,23,23,23,23,23,21,18,15,12,11,8,7,7,8,9,9,9,8,7,7,5,
    5,3,1,0,0,0,1,1,6,9,10,9,8,5,4,3,0,-5,-9,-9,-3,6,15,22,28,34,39,43,49,53,53,51,52,53,46,36,28,22,18,12,
    6,-4,-9,-16,-21,-26,-30,-33,-35,-37,-38,-39,-39,-38,-37,-37,-35,-34,-34,-36,-40,-52,-66,-74,-81,-90,-97,-100,-102,-104,
    -107,-109,-110,-108,-107,-105,-103,-101,-99,-96,-92,-89,-85,-81,-76,-68,-61,-52,-49,-42,-34,-27,-22,-17,-13,-14,-16,-17,-14,-13,
    -12,-12,-12,-16,-19,-20,-22,-24,-26,-30,-33,-36,-43,-45,-44,-40,-35,-30,-26,-23,-20,-16,-13,-10,-8,-8,-8,-5,0,3,9,17,23
];

// from here on only the turning points: bar number, value
const turns = [
    [172,23],[174,27],[178,31],[181,34],[184,35],[187,33],[190,24],[192,23],[194,25],[198,23],[208,21],[214,22],[218,26],
    [220,27],[222,25],[225,19],[228,14],[231,9],[234,8],[236,9],[240,20],[243,28],[245,36],[248,40],[250,36],[252,27],
    [254,20],[256,5],[257,-3],[259,-9],[262,-20],[265,-28],[267,-32],[270,-29],[272,-25],[274,-14],[275,-5],[276,4],
    [278,11],[280,18],[283,22],[286,24],[288,25],[289,22],[291,14],[293,6],[294,-2],[297,-12],[300,-24],[303,-28],
    [306,-26],[309,-25],[313,-23]
];
for (let k = 1; k < turns.length; k++) {
    const [from, a] = turns[k - 1];
    const [to, b] = turns[k];
    for (let i = from + 1; i <= to; i++) histogram[i] = Math.round(a + (b - a) * (i - from) / (to - from));
}

const macd = document.getElementById('macd');
histogram.forEach((v, i) => {
    if (v) draw(macd, 'rect', { x: 3 + i * 4, y: v > 0 ? 70 - v : 70, width: 1, height: Math.abs(v), class: 'bars' });
});
const signal = '0,31 8,33 16,37 25,42 33,47 40,50 49,50 58,49 67,46 76,45 87,45 100,46 110,48 120,53 131,58 142,61 154,61 ' +
    '167,62 176,64 186,67 200,67 216,64 229,64 238,68 246,70 256,67 265,60 272,49 278,38 287,28 298,20 307,22 316,31 ' +
    '323,40 330,51 339,65 350,82 359,92 370,102 381,106 406,106 415,114 426,131 435,148 444,163 453,171 464,175 475,175 ' +
    '486,170 497,164 506,153 515,141 524,128 534,111 543,99 553,89 564,84 578,84 596,87 607,94 618,103 627,106 638,105 ' +
    '649,98 660,89 669,82 680,75 691,67 705,55 718,46 730,40 743,36 753,37 765,42 780,45 804,46 841,48 866,48 884,45 ' +
    '900,48 915,53 931,57 945,60 960,57 972,50 986,42 998,38 1010,39 1022,48 1035,61 1047,75 1059,86 1071,93 1084,97 ' +
    '1096,93 1107,83 1119,68 1131,57 1145,50 1159,48 1172,51 1184,60 1196,71 1205,80 1212,86 1223,93 1233,95 1248,95 1255,93';
draw(macd, 'polyline', { points: signal, class: 'signal' });
scale('macdScale', [['0.001546', 1, 5], ['-0.002835', 196, 191]]);

// RSI, one value every 4px
const rsi = [
    90,88,92,99,106,105,107,100,96,85,79,82,83,85,86,91,93,88,87,91,94,92,90,89,90,94,102,103,106,100,103,99,95,90,93,90,
    98,98,99,98,100,101,106,105,104,98,101,99,94,85,81,89,97,99,104,107,105,109,121,116,108,89,74,69,72,72,70,72,70,68,66,
    84,84,81,80,100,110,113,109,106,108,115,121,118,120,122,120,119,120,117,119,118,116,114,112,113,113,109,112,112,122,127,
    145,153,145,141,145,146,139,136,137,139,141,137,132,132,133,131,131,129,129,124,126,126,126,124,106,105,97,104,101,93,92,
    92,95,96,112,113,111,104,104,106,108,106,118,121,114,116,118,119,124,126,125,135,126,114,106,100,99,99,101,99,98,98,97,
    99,104,107,97,90,90,85,76
];
const rsiRest = '691,75 697,86 709,85 718,88 725,89 735,84 743,85 751,96 758,102 763,100 771,85 780,95 789,80 796,79 802,89 ' +
    '811,85 823,87 835,90 847,87 860,84 872,78 882,71 888,86 894,112 902,101 911,92 917,96 923,95 931,96 942,93 954,87 ' +
    '961,89 967,69 976,65 983,68 991,65 997,85 1005,95 1013,101 1020,101 1024,129 1028,120 1035,113 1041,117 1049,122 ' +
    '1054,118 1059,120 1068,125 1075,117 1084,108 1088,96 1096,82 1108,79 1120,85 1135,87 1141,90 1147,82 1156,96 ' +
    '1162,107 1169,102 1175,114 1183,122 1196,123 1203,121 1211,116 1215,118 1222,112 1230,110 1239,114 1248,109 1255,113';
const rsiSvg = document.getElementById('rsi');
hline(rsiSvg, 60, 'level-line');
hline(rsiSvg, 140, 'level-line');
draw(rsiSvg, 'polyline', { points: rsi.map((v, i) => `${i * 4 - 1},${v}`).join(' ') + ' ' + rsiRest, class: 'rsi-line' });
scale('rsiScale', [['100.00', 1, 5], ['70.00', 61], ['30.00', 141], ['0.00', 202, 196]]);

const times = ['7 Oct 2022', '9 Oct 21:00', '10 Oct 13:00', '11 Oct 05:00', '11 Oct 21:00', '12 Oct 13:00', '13 Oct 05:00',
    '13 Oct 21:00', '14 Oct 13:00', '17 Oct 05:00', '17 Oct 21:00', '18 Oct 13:00', '19 Oct 05:00', '19 Oct 21:00',
    '20 Oct 13:00', '21 Oct 05:00', '23 Oct 21:00', '24 Oct 13:00', '25 Oct 05:00', '25 Oct 21:00'];
document.getElementById('times').innerHTML = times.map(t => `<li>${t}</li>`).join('');
```
